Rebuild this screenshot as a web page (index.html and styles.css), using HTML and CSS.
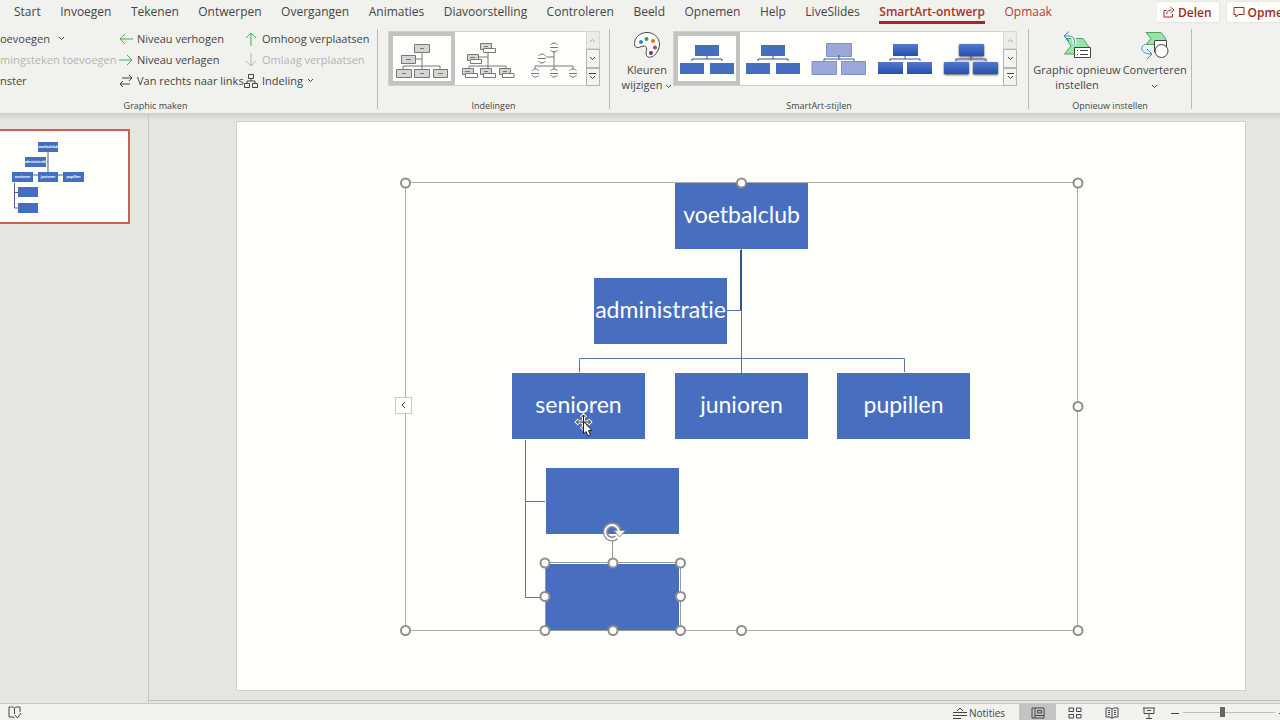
FILE: index.html
```html
<!DOCTYPE html>
<html lang="nl">
<head>
    <meta charset="UTF-8">
    <meta name="viewport" content="width=device-width, initial-scale=1.0">
    <title>SmartArt-ontwerp</title>
    <link rel="stylesheet" href="styles.css">
</head>
<body>
    <header class="topbar">
        <nav class="tabs">
            <button>Start</button>
            <button>Invoegen</button>
            <button>Tekenen</button>
            <button>Ontwerpen</button>
            <button>Overgangen</button>
            <button>Animaties</button>
            <button>Diavoorstelling</button>
            <button>Controleren</button>
            <button>Beeld</button>
            <button>Opnemen</button>
            <button>Help</button>
            <button>LiveSlides</button>
            <button class="active">SmartArt-ontwerp</button>
            <button class="context">Opmaak</button>
        </nav>
        <div class="actions">
            <button class="action">
                <svg width="12" height="12" viewBox="0 0 12 12"><path d="M3.500 4.500H1V11H9.500V8M3.500 8C4 5.500 6 4 8.500 4M7.500 1L11 4L7.500 7"/></svg>
                Delen
            </button>
            <button class="action">
                <svg width="12" height="12" viewBox="0 0 12 12"><path d="M1 1.500H11V8.500H5.500L3 11V8.500H1Z"/></svg>
                Opmerkingen
            </button>
        </div>
    </header>

    <div class="ribbon">
        <section class="group group-create">
            <div class="group-body commands">
                <div class="column">
                    <button class="cmd">oevoegen <svg class="chev wide" width="7" height="5" viewBox="0 0 7 5"><path d="M1 1L3.500 3.500L6 1"/></svg></button>
                    <button class="cmd" disabled>mingsteken toevoegen</button>
                    <button class="cmd">nster</button>
                </div>
                <div class="column">
                    <button class="cmd"><svg class="green" width="14" height="14" viewBox="0 0 14 14"><path d="M14 7H1M6 2L1 7L6 12"/></svg>Niveau verhogen</button>
                    <button class="cmd"><svg class="green" width="14" height="14" viewBox="0 0 14 14"><path d="M0 7H13M8 2L13 7L8 12"/></svg>Niveau verlagen</button>
                    <button class="cmd"><svg width="14" height="14" viewBox="0 0 14 14"><path d="M3 4H13M10 1L13 4L10 7M11 10H1M4 7L1 10L4 13"/></svg>Van rechts naar links</button>
                </div>
                <div class="column">
                    <button class="cmd"><svg class="green" width="14" height="14" viewBox="0 0 14 14"><path d="M7 14V1M2 6L7 1L12 6"/></svg>Omhoog verplaatsen</button>
                    <button class="cmd" disabled><svg width="14" height="14" viewBox="0 0 14 14"><path d="M7 0V13M2 8L7 13L12 8"/></svg>Omlaag verplaatsen</button>
                    <button class="cmd"><svg width="14" height="14" viewBox="0 0 14 14"><path d="M4.500 .500H9.500V4.500H4.500ZM.500 9.500H5.500V13.500H.500ZM8.500 9.500H13.500V13.500H8.500ZM7 4.500V7M3 9.500V7H11V9.500"/></svg>Indeling<svg class="chev" width="7" height="5" viewBox="0 0 7 5"><path d="M1 1L3.500 3.500L6 1"/></svg></button>
                </div>
            </div>
            <h2>Graphic maken</h2>
        </section>

        <section class="group group-layouts">
            <div class="group-body">
                <div class="gallery">
                    <button class="option selected" aria-label="Organigram">
                        <svg class="layout-icon" width="54" height="40" viewBox="0 0 54 40">
                            <path d="M27 12V30M19 20H27M8 30V27H45V30"/>
                            <path class="fill" d="M19.500 5.500H34.500V13.500H19.500ZM6.500 16.500H20.500V24.500H6.500ZM1.500 30.500H16.500V38.500H1.500ZM19.500 30.500H34.500V38.500H19.500ZM38.500 30.500H52.500V38.500H38.500Z"/>
                            <path d="M25 9.500H29M11 20.500H16M7 34.500H11M25 34.500H29M43 34.500H48"/>
                        </svg>
                    </button>
                    <button class="option" aria-label="Organigram met naam en titel">
                        <svg class="layout-icon" width="54" height="40" viewBox="0 0 54 40">
                            <path d="M27 12V30M18 18H27M8 30V27H45V30"/>
                            <path class="fill" d="M19.500 4.500H30.500V10.500H19.500ZM6.500 15.500H17.500V21.500H6.500ZM1.500 29.500H12.500V35.500H1.500ZM19.500 29.500H30.500V35.500H19.500ZM38.500 29.500H49.500V35.500H38.500Z"/>
                            <path class="plain" d="M22.500 9.500H34.500V13.500H22.500ZM9.500 20.500H20.500V24.500H9.500ZM4.500 34.500H16.500V38.500H4.500ZM22.500 34.500H34.500V38.500H22.500ZM41.500 34.500H53V38.500H41.500Z"/>
                            <path d="M23 7.500H27M9 18.500H14M4 32.500H9M23 32.500H27M42 32.500H46"/>
                        </svg>
                    </button>
                    <button class="option" aria-label="Organigram met halve cirkels">
                        <svg class="layout-icon" width="54" height="40" viewBox="0 0 54 40">
                            <path d="M27 12V30M19 18H27M8 30V27H46V30"/>
                            <path d="M23.500 6A4 4 0 0 1 30.500 6M23.500 11A4 4 0 0 0 30.500 11M11.500 17A4 4 0 0 1 18.500 17M11.500 22A4 4 0 0 0 18.500 22"/>
                            <path d="M5 32A4 4 0 0 1 12 32M5 36A4 4 0 0 0 12 36M23.500 32A4 4 0 0 1 30.500 32M23.500 36A4 4 0 0 0 30.500 36M42.500 32A4 4 0 0 1 49.500 32M42.500 36A4 4 0 0 0 49.500 36"/>
                            <path d="M23 8.500H31M11 19.500H19M4 34.500H12M23 34.500H31M42 34.500H50"/>
                        </svg>
                    </button>
                    <div class="scroller">
                        <button disabled aria-label="Omhoog"><svg class="chev" width="7" height="5" viewBox="0 0 7 5"><path d="M1 4L3.500 1.500L6 4"/></svg></button>
                        <button aria-label="Omlaag"><svg class="chev" width="7" height="5" viewBox="0 0 7 5"><path d="M1 1L3.500 3.500L6 1"/></svg></button>
                        <button aria-label="Meer"><svg class="chev" width="7" height="7" viewBox="0 0 7 7"><path d="M0 .500H7M1 3L3.500 5.500L6 3"/></svg></button>
                    </div>
                </div>
            </div>
            <h2>Indelingen</h2>
        </section>

        <section class="group group-styles">
            <div class="group-body">
                <button class="big">
                    <svg width="28" height="28" viewBox="0 0 28 28">
                        <path d="M14 1.500C7 1.500 1.500 6.500 1.500 12.500C1.500 15.500 3 17 5.500 16.500C9 15.500 12 13.500 13.500 16.500C14.500 19 12 21.500 13.500 24.500C15 27.500 20 26.500 23 22.500C25.500 19.500 26.500 16 26.500 13C26 6 20.500 1.500 14 1.500Z"/>
                        <circle cx="8" cy="11" r="2" fill="#2f83c5" stroke="none"/>
                        <circle cx="13.500" cy="8" r="2" fill="#35a14d" stroke="none"/>
                        <circle cx="20" cy="10" r="2" fill="#d5741e" stroke="none"/>
                        <circle cx="22" cy="16.500" r="2" fill="#d03a48" stroke="none"/>
                        <circle cx="18" cy="22" r="2" fill="#80278d" stroke="none"/>
                    </svg>
                    <span>Kleuren<br>wijzigen <svg class="chev" width="7" height="5" viewBox="0 0 7 5"><path d="M1 1L3.500 3.500L6 1"/></svg></span>
                </button>
                <div class="gallery">
                    <button class="option selected" aria-label="Eenvoudige opvulling">
                        <svg class="style-icon" width="54" height="32" viewBox="0 0 54 32"><path d="M27 13V16M12 18V16H42V18"/><path class="box" d="M15 2H39V13H15ZM0 20H24V31H0ZM30 20H54V31H30Z"/></svg>
                    </button>
                    <button class="option" aria-label="Witte omtrek">
                        <svg class="style-icon" width="54" height="32" viewBox="0 0 54 32"><path d="M27 13V16M12 18V16H42V18"/><path class="box" d="M15 2H39V13H15ZM0 20H24V31H0ZM30 20H54V31H30Z"/></svg>
                    </button>
                    <button class="option" aria-label="Subtiel effect">
                        <svg class="style-icon" width="54" height="32" viewBox="0 0 54 32"><path class="box pale" d="M14.500 .500H39.500V13.500H14.500ZM0 18.500H24.500V31.500H0ZM29.500 18.500H53.500V31.500H29.500Z"/><path d="M27 12V16M12 18V16H42V18"/></svg>
                    </button>
                    <button class="option" aria-label="Gemiddeld effect">
                        <svg class="style-icon" width="54" height="32" viewBox="0 0 54 32">
                            <defs><linearGradient id="shade" x1="0" y1="0" x2="0" y2="1"><stop offset="0" stop-color="#5379c9"/><stop offset="1" stop-color="#254fb0"/></linearGradient></defs>
                            <g fill="url(#shade)"><rect x="15" y="1" width="25" height="12"/><rect y="19" width="25" height="12"/><rect x="29" y="19" width="25" height="12"/></g>
                            <path d="M27 12V16M12 18V16H42V18"/>
                        </svg>
                    </button>
                    <button class="option" aria-label="Intens effect">
                        <svg class="style-icon raised" width="54" height="32" viewBox="0 0 54 32">
                            <g fill="url(#shade)"><rect x="15" y="1" width="25" height="12" rx="1"/><rect y="19" width="25" height="12" rx="1"/><rect x="29" y="19" width="25" height="12" rx="1"/></g>
                            <path d="M27 12V16M12 18V16H42V18"/>
                        </svg>
                    </button>
                    <div class="scroller">
                        <button disabled aria-label="Omhoog"><svg class="chev" width="7" height="5" viewBox="0 0 7 5"><path d="M1 4L3.500 1.500L6 4"/></svg></button>
                        <button aria-label="Omlaag"><svg class="chev" width="7" height="5" viewBox="0 0 7 5"><path d="M1 1L3.500 3.500L6 1"/></svg></button>
                        <button aria-label="Meer"><svg class="chev" width="7" height="7" viewBox="0 0 7 7"><path d="M0 .500H7M1 3L3.500 5.500L6 3"/></svg></button>
                    </div>
                </div>
            </div>
            <h2>SmartArt-stijlen</h2>
        </section>

        <section class="group group-reset">
            <div class="group-body">
                <button class="big">
                    <svg width="28" height="28" viewBox="0 0 28 28">
                        <path class="mint" d="M3 7.500H20L26 16V23H1.500L8 15Z"/>
                        <path class="halo" d="M2 5H8C11 6 12 8 11.500 13"/>
                        <path class="blue" d="M6 .500L1 5L6 10M1 5H6C10 5 12 8 11.500 12.500"/>
                        <path class="white" d="M11.500 16.500H27.500V26.500H11.500Z"/>
                        <path class="thin" d="M14 19.500H15M17 19.500H25M14 23.500H15M17 23.500H25"/>
                    </svg>
                    <span>Graphic opnieuw<br>instellen</span>
                </button>
                <button class="big">
                    <svg width="28" height="28" viewBox="0 0 28 28">
                        <path class="mint" d="M5 1.500H20L25 8L20 13.500H5L10 7.500Z"/>
                        <path class="white" d="M13.500 9.500H25.500V21H13.500Z"/>
                        <circle class="white" cx="20.500" cy="20" r="6.500"/>
                        <path class="blue" d="M4 13C-2 17 1 23 10 23M6 18L11 23L6 28"/>
                    </svg>
                    <span>Converteren<br><svg class="chev" width="7" height="5" viewBox="0 0 7 5"><path d="M1 1L3.500 3.500L6 1"/></svg></span>
                </button>
            </div>
            <h2>Opnieuw instellen</h2>
        </section>
    </div>

    <main class="workspace">
        <aside class="thumbs">
            <button class="thumb" aria-label="Dia 1">
                <svg width="128" height="91" viewBox="0 0 128 91">
                    <path class="lines" d="M48 21V46M46 31H48M22.500 46V44H73.500V46M14.500 52V77H18M14.500 61.500H18"/>
                    <g class="boxes">
                        <rect x="38" y="11" width="20" height="10"/>
                        <rect x="25" y="26" width="21" height="10"/>
                        <rect x="12" y="41" width="21" height="10"/>
                        <rect x="38" y="41" width="20" height="10"/>
                        <rect x="63" y="41" width="21" height="10"/>
                        <rect x="18" y="56" width="20" height="10"/>
                        <rect x="18" y="72" width="20" height="10"/>
                    </g>
                    <text x="48" y="17">voetbalclub</text>
                    <text x="35.500" y="32">administratie</text>
                    <text x="22.500" y="47">senioren</text>
                    <text x="48" y="47">junioren</text>
                    <text x="73.500" y="47">pupillen</text>
                </svg>
            </button>
        </aside>

        <div class="stage">
            <div class="slide">
                <div class="diagram">
                    <svg class="connectors" width="674" height="448" viewBox="0 0 674 448">
                        <path d="M336.500 65V190M322 127.500H336.500M174.500 189V175.500H499.500V189M120.500 257V414.500H141M120.500 318.500H140"/>
                        <path class="strong" d="M336 67V127"/>
                    </svg>
                    <div class="node n-root">voetbalclub</div>
                    <div class="node n-admin">administratie</div>
                    <div class="node n-senior">senioren</div>
                    <div class="node n-junior">junioren</div>
                    <div class="node n-pupil">pupillen</div>
                    <div class="node n-child1"></div>
                    <div class="node n-child2"></div>
                    <svg class="handles" width="674" height="448" viewBox="0 0 674 448">
                        <path class="frame" d="M.500 -.500H672.500V447.500H.500Z"/>
                        <path class="frame dark" d="M140.500 379.500H275.500V447.500H140.500ZM207.500 357V380"/>
                        <g class="dots">
                            <circle cx="0.500" cy="0" r="4.500"/>
                            <circle cx="336.500" cy="0" r="4.500"/>
                            <circle cx="673" cy="0" r="4.500"/>
                            <circle cx="673" cy="223.500" r="4.500"/>
                            <circle cx="673" cy="447.500" r="4.500"/>
                            <circle cx="336.500" cy="447.500" r="4.500"/>
                            <circle cx="0.500" cy="447.500" r="4.500"/>
                            <circle cx="140" cy="380" r="4.500"/>
                            <circle cx="208" cy="380" r="4.500"/>
                            <circle cx="275.500" cy="380" r="4.500"/>
                            <circle cx="140" cy="413.500" r="4.500"/>
                            <circle cx="275.500" cy="413.500" r="4.500"/>
                            <circle cx="140" cy="447.500" r="4.500"/>
                            <circle cx="208" cy="447.500" r="4.500"/>
                            <circle cx="275.500" cy="447.500" r="4.500"/>
                        </g>
                        <!-- rotate handle -->
                        <g fill="none">
                            <path d="M211.500 354.500A7 7 0 1 1 214 347" stroke="#8e8f8c" stroke-width="5"/>
                            <path d="M209 347.500H220.500L214.500 354Z" fill="#fff" stroke="#8e8f8c"/>
                            <path d="M211.500 354.500A7 7 0 1 1 214 348.500" stroke="#fff" stroke-width="2"/>
                        </g>
                        <!-- move cursor -->
                        <g class="cursor">
                            <path class="arrows" d="M178.500 232V246M171.500 239H185.500M176 234.500L178.500 232L181 234.500M176 243.500L178.500 246L181 243.500M174 236.500L171.500 239L174 241.500M183 236.500L185.500 239L183 241.500"/>
                            <path class="cross" d="M178.500 232V246M171.500 239H185.500M176 234.500L178.500 232L181 234.500M176 243.500L178.500 246L181 243.500M174 236.500L171.500 239L174 241.500M183 236.500L185.500 239L183 241.500"/>
                            <path d="M178.500 238.500V251L181 248.500L183 253L185.500 252L183.500 247.500H187Z"/>
                        </g>
                    </svg>
                    <button class="pane-toggle" aria-label="Tekstvenster"><svg width="5" height="8" viewBox="0 0 5 8"><path d="M4 1L1 4L4 7"/></svg></button>
                </div>
            </div>
        </div>
    </main>

    <footer class="statusbar">
        <button class="proof" aria-label="Spelling"><svg width="14" height="13" viewBox="0 0 14 13"><path d="M6.500 2C5 .500 3 1 1 1V11H5L6.500 12M6.500 2C8 .500 10 1 12 1V6M6.500 2V8M7 9L9.500 12L13 7"/></svg></button>
        <div class="views">
            <button class="notes"><svg width="14" height="12" viewBox="0 0 14 12"><path d="M4 4L7 1L10 4M0 5.500H14M0 8.500H14M0 11.500H8"/></svg>Notities</button>
            <button class="view current" aria-label="Normaal"><svg width="14" height="12" viewBox="0 0 14 12"><path d="M1 1H13V11H1ZM4 1V11M4 8.500H13M6.500 3.500H10.500V6H6.500Z"/></svg></button>
            <button class="view" aria-label="Diasorteerder"><svg width="14" height="12" viewBox="0 0 14 12"><path d="M1 1H5.500V4.500H1ZM8.500 1H13V4.500H8.500ZM1 7.500H5.500V11H1ZM8.500 7.500H13V11H8.500Z"/></svg></button>
            <button class="view" aria-label="Leesweergave"><svg width="14" height="12" viewBox="0 0 14 12"><path d="M7 2C5 .500 3 1 1 1V10H5L7 11.500L9 10H13V1C11 1 9 .500 7 2ZM7 2V11M3 3.500H5M3 5.500H5M3 7.500H5M9 3.500H11M9 5.500H11M9 7.500H11"/></svg></button>
            <button class="view" aria-label="Diavoorstelling"><svg width="14" height="12" viewBox="0 0 14 12"><path d="M1 1H13M2 1V6.500H12V1M5 3.500H9M7 6.500V11M4 11.500H10"/></svg></button>
            <button class="zoom-step" aria-label="Uitzoomen"><svg width="8" height="8" viewBox="0 0 8 8"><path d="M0 4.500H8"/></svg></button>
            <input class="zoom" type="range" min="0" max="100" value="42" aria-label="Zoomen">
            <button class="zoom-step" aria-label="Inzoomen"><svg width="8" height="8" viewBox="0 0 8 8"><path d="M0 4.500H8M4 0V8"/></svg></button>
        </div>
    </footer>
</body>
</html>
```
FILE: styles.css
```css
/* General Styles */
* {
    box-sizing: border-box;
}

body {
    margin: 0;
    height: 100vh;
    display: flex;
    flex-direction: column;
    overflow: hidden;
    background-color: #f1f2ee;
    color: #444;
    font-family: "Open Sans", "Noto Sans", sans-serif;
    font-size: 12px;
}

button {
    margin: 0;
    padding: 0;
    border: none;
    background: none;
    color: inherit;
    font: inherit;
    white-space: nowrap;
}

svg {
    flex: none;
    fill: none;
    stroke: #444;
}

.chev {
    vertical-align: middle;
}

/* Tabs */
.topbar {
    display: flex;
    justify-content: space-between;
    height: 25px;
    padding-left: 14px;
}

.tabs {
    display: flex;
    flex: 0 0 1038px;
    justify-content: space-between;
}

.tabs button {
    height: 24px;
    padding-top: 3px;
    border-bottom: 3px solid transparent;
    line-height: 18px;
}

.tabs .active {
    border-color: #a4262c;
    color: #a8322a;
    font-weight: 600;
}

.tabs .context {
    color: #b5392f;
}

.actions {
    display: flex;
    flex: 0 0 123px;
    gap: 8px;
    overflow: hidden;
}

.action {
    display: flex;
    flex: none;
    align-items: center;
    gap: 3px;
    height: 20px;
    margin-top: 2px;
    padding: 0 7px 0 6px;
    border-radius: 2px;
    background-color: #fffffc;
    box-shadow: 0 0 2px #ccc;
    color: #9c2b20;
    font-weight: 600;
}

.action svg {
    stroke: #9c2b20;
}

/* Ribbon */
.ribbon {
    display: flex;
    height: 88px;
    padding-top: 4px;
    font-size: 11px;
}

.group {
    display: flex;
    flex-direction: column;
    justify-content: space-between;
    min-width: 0;
    height: 80px;
    border-right: 1px solid #b9bab7;
}

.group h2 {
    margin: 0;
    font-size: 9px;
    font-weight: normal;
    line-height: 6px;
    text-align: center;
}

.group-body {
    display: flex;
    justify-content: center;
    padding-top: 2px;
}

.group-create {
    flex: 0 0 378px;
}

.group-create h2 {
    padding-right: 66px;
}

.group-layouts {
    flex: 0 0 232px;
}

.group-styles {
    flex: 0 0 419px;
}

.group-reset {
    flex: 0 0 163px;
}

.commands {
    display: grid;
    grid-template-columns: 119px 125px 1fr;
    padding-top: 0;
}

.column {
    display: flex;
    flex-direction: column;
    align-items: flex-start;
    min-width: 0;
}

.cmd {
    display: flex;
    align-items: center;
    gap: 4px;
    height: 21px;
    padding-bottom: 2px;
}

.cmd:disabled,
.cmd:disabled svg {
    color: #b4b4b2;
    stroke: #b4b4b2;
}

.cmd .wide {
    margin-left: 4px;
}

.green {
    stroke: #3fae57;
}

.gallery {
    display: flex;
    height: 55px;
    border: 1px solid #d0d1ce;
    background-color: #fffffc;
}

.option {
    display: flex;
    align-items: center;
    justify-content: center;
    width: 66px;
    height: 53px;
    border: 4px solid transparent;
}

.option.selected {
    border-color: #c3c4c1;
}

.layout-icon {
    stroke: #777;
}

.layout-icon .fill {
    fill: #d5d5d5;
}

.layout-icon .plain {
    fill: #fff;
}

.style-icon {
    overflow: visible;
    stroke: #3b5590;
}

.style-icon .box {
    fill: #466ec0;
    stroke: none;
}

.style-icon .pale {
    fill: #9ca8d8;
    stroke: #8090c8;
}

.style-icon g {
    stroke: none;
}

.raised {
    filter: drop-shadow(0 1px 1px #555);
}

.scroller {
    display: grid;
    grid-template-rows: repeat(3, 1fr);
    width: 14px;
    margin: -1px;
}

.scroller button {
    display: flex;
    align-items: center;
    justify-content: center;
    border: 1px solid #b5b6b3;
    background-color: #f3f4f0;
}

.scroller button:disabled {
    border-color: #d8d9d6;
    background-color: #ecedea;
}

.scroller button:disabled svg {
    stroke: #aaa;
}

.big {
    display: flex;
    flex-direction: column;
    align-items: center;
    width: 52px;
    line-height: 15px;
}

.group-reset .big {
    width: auto;
}

.group-reset .group-body {
    gap: 2px;
}

.big > svg {
    margin-bottom: 3px;
}

.big > svg path {
    fill: #fffffc;
}

.big > svg .mint {
    fill: #9be3a6;
    stroke: #4ba45d;
}

.big > svg .blue {
    fill: none;
    stroke: #3288c6;
}

.big > svg .halo {
    fill: none;
    stroke: #f1f2ee;
    stroke-width: 4;
}

.big > svg .white {
    fill: #fffffc;
}

/* Workspace */
.workspace {
    display: flex;
    flex: 1;
    min-height: 0;
    background: linear-gradient(#cfd0cd, #e5e6e2 7px);
}

.thumbs {
    flex: 0 0 149px;
    padding-top: 16px;
    border-right: 1px solid #c8c9c6;
}

.thumb {
    display: block;
    border: 2px solid #cf5f50;
    border-left: none;
    background-color: #fffffc;
}

.thumb svg {
    display: block;
}

.thumb .lines {
    stroke: #4e5e8c;
}

.thumb .boxes {
    fill: #466ec0;
    stroke: none;
}

.thumb text {
    fill: #fff;
    stroke: none;
    font-family: Lato, sans-serif;
    font-size: 4px;
    font-weight: bold;
    text-anchor: middle;
}

.stage {
    display: flex;
    flex: 1;
    margin-bottom: 2px;
    padding: 8px 34px 9px 87px;
    border-bottom: 1px solid #bfc0bd;
}

.slide {
    display: flex;
    flex: 1;
    align-items: center;
    justify-content: center;
    border: 1px solid #d0d1ce;
    background-color: #fffffc;
}

.diagram {
    position: relative;
    width: 672px;
    height: 447px;
}

.connectors,
.handles {
    position: absolute;
    top: 0;
    left: 0;
    overflow: visible;
}

.connectors {
    stroke: #5c74a4;
}

.connectors .strong {
    stroke: #34538f;
    stroke-width: 2;
}

.node {
    position: absolute;
    display: flex;
    align-items: center;
    justify-content: center;
    width: 133px;
    height: 66px;
    padding-bottom: 4px;
    background-color: #486fbf;
    color: #fff;
    font-family: Lato, sans-serif;
    font-size: 23px;
    font-variant-ligatures: none;
}

.n-root { left: 270px; top: 0; }
.n-admin { left: 189px; top: 95px; }
.n-senior { left: 107px; top: 190px; }
.n-junior { left: 270px; top: 190px; }
.n-pupil { left: 432px; top: 190px; }
.n-child1 { left: 141px; top: 285px; }
.n-child2 { left: 141px; top: 381px; }

.frame {
    stroke: #adaeab;
}

.frame.dark {
    stroke: #9a9b98;
}

.dots {
    fill: #fff;
    stroke: #8e8f8c;
    stroke-width: 2;
}

.cursor {
    fill: #fff;
    stroke: #222;
}

.cursor .arrows {
    fill: none;
    stroke: #fff;
    stroke-width: 3;
}

.cursor .cross {
    fill: none;
}

.pane-toggle {
    position: absolute;
    top: 214px;
    left: -10px;
    display: flex;
    align-items: center;
    justify-content: center;
    width: 17px;
    height: 17px;
    border: 1px solid #c8c9c6;
    background-color: #fffffc;
}

/* Status bar */
.statusbar {
    display: flex;
    justify-content: space-between;
    height: 17px;
    padding-left: 8px;
    border-top: 1px solid #c8c9c6;
    font-size: 10px;
}

.statusbar button {
    display: flex;
    align-items: center;
    padding-top: 1px;
}

.views {
    display: flex;
    flex: 0 0 327px;
    overflow: hidden;
}

.notes {
    flex: 0 0 66px;
    gap: 2px;
}

.view {
    flex: 0 0 37px;
    justify-content: center;
}

.view.current {
    background-color: #c3c4c1;
}

.zoom-step {
    flex: none;
    margin-left: 4px;
}

.zoom {
    flex: none;
    width: 92px;
    height: 16px;
    margin: 0 0 0 4px;
    appearance: none;
    background: linear-gradient(#bdbebb, #bdbebb) center / 100% 1px no-repeat;
}

.zoom::-webkit-slider-thumb {
    appearance: none;
    width: 5px;
    height: 10px;
    background-color: #666;
}
```
